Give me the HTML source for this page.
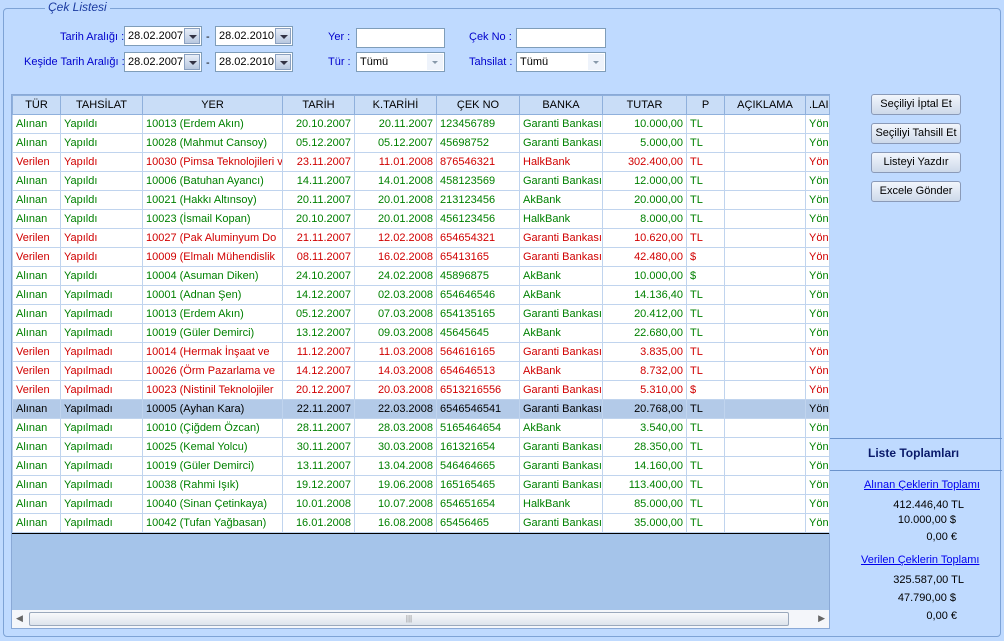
<!DOCTYPE html><html><head><meta charset="utf-8"><style>
*{box-sizing:border-box;margin:0;padding:0}
body{width:1004px;height:641px;background:#bfdaff;font-family:"Liberation Sans",sans-serif;font-size:11px;position:relative;overflow:hidden}
.frame{position:absolute;left:3px;top:8px;width:998px;height:629px;border:1px solid #7ea3d6;border-radius:4px}
.legend{position:absolute;left:40px;top:0;background:#bfdaff;padding:0 3px;color:#1a3aa0;font-size:12px;font-style:italic}
.lbl{position:absolute;color:#0000cc;font-size:11px}
.inp{position:absolute;background:#fff;border:1px solid #7f9db9;height:20px;font-size:11px;line-height:18px;padding-left:3px;overflow:hidden}
.dd{position:absolute;right:1px;top:1px;width:16px;height:16px;background:linear-gradient(#e8eef8,#b8c8e0);border:1px solid #8aa0c0}
.dd:after{content:"";position:absolute;left:4px;top:6px;border:4px solid transparent;border-top:4px solid #334;}
.cb{position:absolute;right:1px;top:1px;width:16px;height:16px;background:#eef3fb}
.cb:after{content:"";position:absolute;left:5px;top:7px;border:3px solid transparent;border-top:3px solid #8899aa}
table{position:absolute;left:12px;top:95px;border-collapse:collapse;table-layout:fixed;width:817px}
td,th{height:19px;border:1px solid #c0d4ee;white-space:nowrap;overflow:hidden;padding:0 3px;font-weight:normal;font-size:11px}
th{background:#c9ddf7;text-align:center;color:#000;border-color:#8fb0dc}
tr.g td{color:#008000;background:#fff}
tr.r td{color:#d00000;background:#fff}
tr.s td{color:#000;background:#b3cae8}
td.n{text-align:right}
.empty{position:absolute;left:12px;top:533px;width:817px;height:78px;background:#a5c4ea;border-top:1px solid #000}
.gridb{position:absolute;left:11px;top:94px;width:819px;height:535px;border:1px solid #8aa9d6}
.sb{position:absolute;left:12px;top:610px;width:817px;height:18px;background:#f4f6fa}
.thumb{position:absolute;left:17px;top:2px;width:760px;height:14px;border:1px solid #9aa8bc;border-radius:2px;background:linear-gradient(#f8f9fb,#dde3ec);text-align:center;font-size:8px;color:#888;line-height:12px}
.btn{position:absolute;left:871px;width:90px;height:21px;border:1px solid #8a9ab8;border-radius:3px;background:linear-gradient(#f2f6fc,#cdd9ea);text-align:center;line-height:19px;font-size:11px}
.rp{position:absolute;color:#000;font-size:11px;text-align:right}
.lnk{position:absolute;color:#0000ee;text-decoration:underline;font-size:11px}
.hl{position:absolute;left:830px;width:172px;height:1px;background:#6b93cc}
</style></head><body>
<div class="frame"></div>
<div class="legend" style="top:0;left:45px">Çek Listesi</div>
<div class="lbl" style="left:60px;top:31px">Tarih Aralığı :</div>
<div class="lbl" style="left:24px;top:56px">Keşide Tarih Aralığı :</div>
<div class="inp" style="left:124px;top:26px;width:78px">28.02.2007<span class="dd"></span></div>
<div class="lbl" style="left:206px;top:31px;color:#000">-</div>
<div class="inp" style="left:215px;top:26px;width:78px">28.02.2010<span class="dd"></span></div>
<div class="inp" style="left:124px;top:52px;width:78px">28.02.2007<span class="dd"></span></div>
<div class="lbl" style="left:206px;top:57px;color:#000">-</div>
<div class="inp" style="left:215px;top:52px;width:78px">28.02.2010<span class="dd"></span></div>
<div class="lbl" style="left:328px;top:31px">Yer :</div>
<div class="inp" style="left:356px;top:28px;width:89px"></div>
<div class="lbl" style="left:328px;top:56px">Tür :</div>
<div class="inp" style="left:356px;top:52px;width:89px">Tümü<span class="cb"></span></div>
<div class="lbl" style="left:469px;top:31px">Çek No :</div>
<div class="inp" style="left:516px;top:28px;width:90px"></div>
<div class="lbl" style="left:469px;top:56px">Tahsilat :</div>
<div class="inp" style="left:516px;top:52px;width:90px">Tümü<span class="cb"></span></div>
<div class="gridb"></div>
<table>
<colgroup><col style="width:48px"><col style="width:82px"><col style="width:140px"><col style="width:72px"><col style="width:82px"><col style="width:83px"><col style="width:83px"><col style="width:84px"><col style="width:38px"><col style="width:81px"><col style="width:24px"></colgroup>
<tr><th>TÜR</th><th>TAHSİLAT</th><th>YER</th><th>TARİH</th><th>K.TARİHİ</th><th>ÇEK NO</th><th>BANKA</th><th>TUTAR</th><th>P</th><th>AÇIKLAMA</th><th>.LAI</th></tr>
<tr class="g"><td>Alınan</td><td>Yapıldı</td><td>10013 (Erdem Akın)</td><td class="n">20.10.2007</td><td class="n">20.11.2007</td><td>123456789</td><td>Garanti Bankası</td><td class="n">10.000,00</td><td>TL</td><td></td><td>Yön</td></tr>
<tr class="g"><td>Alınan</td><td>Yapıldı</td><td>10028 (Mahmut Cansoy)</td><td class="n">05.12.2007</td><td class="n">05.12.2007</td><td>45698752</td><td>Garanti Bankası</td><td class="n">5.000,00</td><td>TL</td><td></td><td>Yön</td></tr>
<tr class="r"><td>Verilen</td><td>Yapıldı</td><td>10030 (Pimsa Teknolojileri ve</td><td class="n">23.11.2007</td><td class="n">11.01.2008</td><td>876546321</td><td>HalkBank</td><td class="n">302.400,00</td><td>TL</td><td></td><td>Yön</td></tr>
<tr class="g"><td>Alınan</td><td>Yapıldı</td><td>10006 (Batuhan Ayancı)</td><td class="n">14.11.2007</td><td class="n">14.01.2008</td><td>458123569</td><td>Garanti Bankası</td><td class="n">12.000,00</td><td>TL</td><td></td><td>Yön</td></tr>
<tr class="g"><td>Alınan</td><td>Yapıldı</td><td>10021 (Hakkı Altınsoy)</td><td class="n">20.11.2007</td><td class="n">20.01.2008</td><td>213123456</td><td>AkBank</td><td class="n">20.000,00</td><td>TL</td><td></td><td>Yön</td></tr>
<tr class="g"><td>Alınan</td><td>Yapıldı</td><td>10023 (İsmail Kopan)</td><td class="n">20.10.2007</td><td class="n">20.01.2008</td><td>456123456</td><td>HalkBank</td><td class="n">8.000,00</td><td>TL</td><td></td><td>Yön</td></tr>
<tr class="r"><td>Verilen</td><td>Yapıldı</td><td>10027 (Pak Aluminyum Do</td><td class="n">21.11.2007</td><td class="n">12.02.2008</td><td>654654321</td><td>Garanti Bankası</td><td class="n">10.620,00</td><td>TL</td><td></td><td>Yön</td></tr>
<tr class="r"><td>Verilen</td><td>Yapıldı</td><td>10009 (Elmalı Mühendislik</td><td class="n">08.11.2007</td><td class="n">16.02.2008</td><td>65413165</td><td>Garanti Bankası</td><td class="n">42.480,00</td><td>$</td><td></td><td>Yön</td></tr>
<tr class="g"><td>Alınan</td><td>Yapıldı</td><td>10004 (Asuman Diken)</td><td class="n">24.10.2007</td><td class="n">24.02.2008</td><td>45896875</td><td>AkBank</td><td class="n">10.000,00</td><td>$</td><td></td><td>Yön</td></tr>
<tr class="g"><td>Alınan</td><td>Yapılmadı</td><td>10001 (Adnan Şen)</td><td class="n">14.12.2007</td><td class="n">02.03.2008</td><td>654646546</td><td>AkBank</td><td class="n">14.136,40</td><td>TL</td><td></td><td>Yön</td></tr>
<tr class="g"><td>Alınan</td><td>Yapılmadı</td><td>10013 (Erdem Akın)</td><td class="n">05.12.2007</td><td class="n">07.03.2008</td><td>654135165</td><td>Garanti Bankası</td><td class="n">20.412,00</td><td>TL</td><td></td><td>Yön</td></tr>
<tr class="g"><td>Alınan</td><td>Yapılmadı</td><td>10019 (Güler Demirci)</td><td class="n">13.12.2007</td><td class="n">09.03.2008</td><td>45645645</td><td>AkBank</td><td class="n">22.680,00</td><td>TL</td><td></td><td>Yön</td></tr>
<tr class="r"><td>Verilen</td><td>Yapılmadı</td><td>10014 (Hermak İnşaat ve</td><td class="n">11.12.2007</td><td class="n">11.03.2008</td><td>564616165</td><td>Garanti Bankası</td><td class="n">3.835,00</td><td>TL</td><td></td><td>Yön</td></tr>
<tr class="r"><td>Verilen</td><td>Yapılmadı</td><td>10026 (Örm Pazarlama ve</td><td class="n">14.12.2007</td><td class="n">14.03.2008</td><td>654646513</td><td>AkBank</td><td class="n">8.732,00</td><td>TL</td><td></td><td>Yön</td></tr>
<tr class="r"><td>Verilen</td><td>Yapılmadı</td><td>10023 (Nistinil Teknolojiler</td><td class="n">20.12.2007</td><td class="n">20.03.2008</td><td>6513216556</td><td>Garanti Bankası</td><td class="n">5.310,00</td><td>$</td><td></td><td>Yön</td></tr>
<tr class="s"><td>Alınan</td><td>Yapılmadı</td><td>10005 (Ayhan Kara)</td><td class="n">22.11.2007</td><td class="n">22.03.2008</td><td>6546546541</td><td>Garanti Bankası</td><td class="n">20.768,00</td><td>TL</td><td></td><td>Yön</td></tr>
<tr class="g"><td>Alınan</td><td>Yapılmadı</td><td>10010 (Çiğdem Özcan)</td><td class="n">28.11.2007</td><td class="n">28.03.2008</td><td>5165464654</td><td>AkBank</td><td class="n">3.540,00</td><td>TL</td><td></td><td>Yön</td></tr>
<tr class="g"><td>Alınan</td><td>Yapılmadı</td><td>10025 (Kemal Yolcu)</td><td class="n">30.11.2007</td><td class="n">30.03.2008</td><td>161321654</td><td>Garanti Bankası</td><td class="n">28.350,00</td><td>TL</td><td></td><td>Yön</td></tr>
<tr class="g"><td>Alınan</td><td>Yapılmadı</td><td>10019 (Güler Demirci)</td><td class="n">13.11.2007</td><td class="n">13.04.2008</td><td>546464665</td><td>Garanti Bankası</td><td class="n">14.160,00</td><td>TL</td><td></td><td>Yön</td></tr>
<tr class="g"><td>Alınan</td><td>Yapılmadı</td><td>10038 (Rahmi Işık)</td><td class="n">19.12.2007</td><td class="n">19.06.2008</td><td>165165465</td><td>Garanti Bankası</td><td class="n">113.400,00</td><td>TL</td><td></td><td>Yön</td></tr>
<tr class="g"><td>Alınan</td><td>Yapılmadı</td><td>10040 (Sinan Çetinkaya)</td><td class="n">10.01.2008</td><td class="n">10.07.2008</td><td>654651654</td><td>HalkBank</td><td class="n">85.000,00</td><td>TL</td><td></td><td>Yön</td></tr>
<tr class="g"><td>Alınan</td><td>Yapılmadı</td><td>10042 (Tufan Yağbasan)</td><td class="n">16.01.2008</td><td class="n">16.08.2008</td><td>65456465</td><td>Garanti Bankası</td><td class="n">35.000,00</td><td>TL</td><td></td><td>Yön</td></tr>
</table>
<div class="empty"></div>
<div class="sb"><span style="position:absolute;left:4px;top:3px;font-size:9px;color:#666">◀</span><div class="thumb">|||</div><span style="position:absolute;right:4px;top:3px;font-size:9px;color:#666">▶</span></div>
<div class="btn" style="top:94px">Seçiliyi İptal Et</div>
<div class="btn" style="top:123px">Seçiliyi Tahsill Et</div>
<div class="btn" style="top:152px">Listeyi Yazdır</div>
<div class="btn" style="top:181px">Excele Gönder</div>
<div class="hl" style="top:438px"></div>
<div class="hl" style="top:470px"></div>
<div style="position:absolute;left:868px;top:446px;font-weight:bold;color:#0a1a6a;font-size:12px">Liste Toplamları</div>
<div class="lnk" style="left:864px;top:479px">Alınan Çeklerin Toplamı</div>
<div class="rp" style="left:860px;width:104px;top:499px">412.446,40 TL</div>
<div class="rp" style="left:860px;width:96px;top:514px">10.000,00 $</div>
<div class="rp" style="left:860px;width:97px;top:531px">0,00 €</div>
<div class="lnk" style="left:861px;top:554px">Verilen Çeklerin Toplamı</div>
<div class="rp" style="left:860px;width:104px;top:574px">325.587,00 TL</div>
<div class="rp" style="left:860px;width:96px;top:592px">47.790,00 $</div>
<div class="rp" style="left:860px;width:97px;top:610px">0,00 €</div>
</body></html>
